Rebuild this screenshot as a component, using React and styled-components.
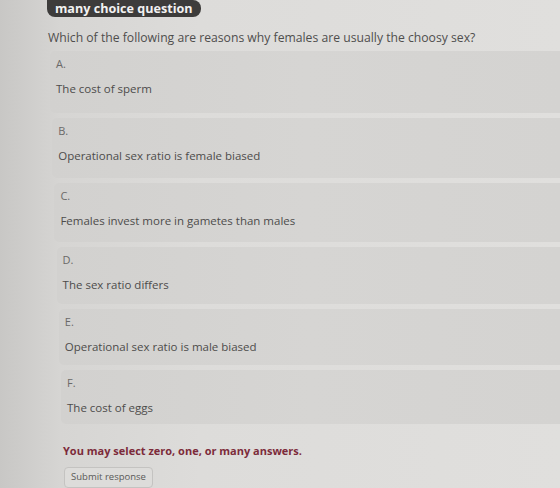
import React from "react";
import styled, { createGlobalStyle } from "styled-components";

const Global = createGlobalStyle`
  html, body {
    margin: 0;
    padding: 0;
    height: 100%;
  }
  body {
    width: 560px;
    height: 488px;
    overflow: hidden;
    font-family: "Open Sans", "DejaVu Sans", sans-serif;
    background: linear-gradient(90deg, #c8c7c5 0px, #d6d5d3 60px, #dddcda 200px, #e0dfdd 560px);
  }
`;

const Page = styled.div`
  display: flex;
  flex-direction: column;
  padding: 0 0 0 47px;
  height: 488px;
  box-sizing: border-box;
  overflow: hidden;
`;

const Badge = styled.div`
  align-self: flex-start;
  background: #3d3c3b;
  color: #f2f2f2;
  font-weight: 700;
  font-size: 12.6px;
  line-height: 17px;
  padding: 0 8px;
  border-radius: 0 8px 8px 8px;
`;

const Question = styled.p`
  margin: 12px 0 0 1px;
  font-size: 12.2px;
  line-height: 18px;
  color: #4f4e4d;
`;

const Options = styled.div`
  display: flex;
  flex-direction: column;
  gap: 5px;
  margin-top: 4px;
`;

const Card = styled.div`
  margin-left: ${(p) => 3 + p.$shift}px;
  height: ${(p) => p.$height}px;
  box-sizing: border-box;
  padding: 5px 6px 0;
  border-radius: 5px 0 0 5px;
  background: linear-gradient(90deg, #d2d1cf 0%, #d6d5d3 50%, #d4d3d1 100%);
  display: flex;
  flex-direction: column;
`;

const Letter = styled.span`
  font-size: 11px;
  line-height: 15px;
  color: #6a6968;
`;

const Answer = styled.span`
  margin-top: 10px;
  font-size: 11.5px;
  line-height: 16px;
  color: #4d4c4b;
`;

const Hint = styled.p`
  margin: 19px 0 0 16px;
  font-size: 11px;
  font-weight: 700;
  line-height: 16px;
  color: #7c2b3a;
`;

const Submit = styled.button`
  align-self: flex-start;
  margin: 8px 0 0 17px;
  width: 89px;
  height: 24px;
  border: 1px solid #c4c3c1;
  border-radius: 4px;
  background: #dddcda;
  font-family: "Open Sans", "DejaVu Sans", sans-serif;
  font-size: 9.5px;
  color: #5a5958;
  padding: 0 0 2px;
`;

const choices = [
  ["A.", "The cost of sperm"],
  ["B.", "Operational sex ratio is female biased"],
  ["C.", "Females invest more in gametes than males"],
  ["D.", "The sex ratio differs"],
  ["E.", "Operational sex ratio is male biased"],
  ["F.", "The cost of eggs"],
];

export default function App() {
  return (
    <>
      <Global />
      <Page>
        <Badge>many choice question</Badge>
        <Question>
          Which of the following are reasons why females are usually the choosy sex?
        </Question>
        <Options>
          {choices.map(([letter, text], i) => (
            <Card key={letter} $shift={i * 2.2} $height={62 - i * 1.6}>
              <Letter>{letter}</Letter>
              <Answer>{text}</Answer>
            </Card>
          ))}
        </Options>
        <Hint>You may select zero, one, or many answers.</Hint>
        <Submit>Submit response</Submit>
      </Page>
    </>
  );
}
